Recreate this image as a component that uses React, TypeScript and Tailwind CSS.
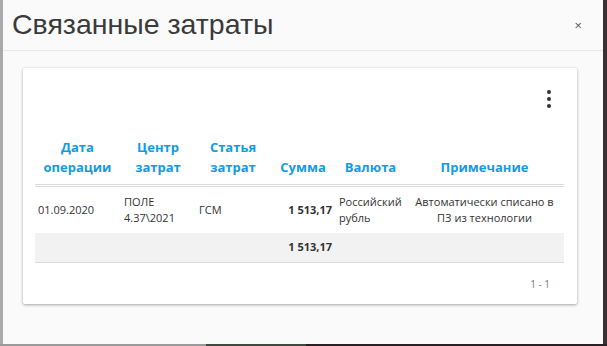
import React from 'react';
import { EllipsisVertical } from 'lucide-react';

const cellFont = { fontFamily: '"Open Sans", "Noto Sans", sans-serif' };

const App: React.FC = () => {
  return (
    <div className="w-[607px] h-[346px] flex flex-col bg-[#2b2326] overflow-hidden">
      <div className="flex h-[344px]">
        <div className="w-[3px] bg-[#a9a9a9]" />

        {/* Modal */}
        <div className="w-[600px] bg-[#fafafa] flex flex-col">
          <div className="h-[51px] flex items-center justify-between pl-[9px] pr-[21px] border-b border-[#e8e8e8]">
            <h2
              className="text-[28.5px] leading-none text-[#3a3a3a] font-normal -mt-[2px]"
              style={{ fontFamily: '"Liberation Sans", Arial, sans-serif' }}
            >
              Связанные затраты
            </h2>
            <button className="text-[13px] leading-none text-[#555]" style={cellFont}>
              ×
            </button>
          </div>

          <div className="pt-[17px] pl-[20px]">
            {/* Card */}
            <div className="w-[554px] h-[236px] bg-white rounded-[2px] shadow-[0_1px_3px_rgba(0,0,0,0.35)] pt-[19px] px-[12px]" style={cellFont}>
              <div className="flex justify-end pr-[4px]">
                <EllipsisVertical className="w-6 h-6 text-[#333]" />
              </div>

              <table className="mt-[22px] w-[529px] table-fixed border-collapse text-[11px] text-[#333]">
                <colgroup>
                  <col className="w-[85px]" />
                  <col className="w-[76px]" />
                  <col className="w-[74px]" />
                  <col className="w-[66px]" />
                  <col className="w-[69px]" />
                  <col className="w-[159px]" />
                </colgroup>
                <thead>
                  <tr className="border-b-[3px] border-double border-[#dcdcdc] text-[13px] leading-5 font-bold text-[#139be1]">
                    <th className="align-bottom text-center pt-1 pb-[7px]">Дата<br />операции</th>
                    <th className="align-bottom text-center pt-1 pb-[7px]">Центр<br />затрат</th>
                    <th className="align-bottom text-center pt-1 pb-[7px]">Статья<br />затрат</th>
                    <th className="align-bottom text-center pt-1 pb-[7px]">Сумма</th>
                    <th className="align-bottom text-center pt-1 pb-[7px]">Валюта</th>
                    <th className="align-bottom text-center pt-1 pb-[7px]">Примечание</th>
                  </tr>
                </thead>
                <tbody className="leading-4">
                  <tr className="h-[47px]">
                    <td className="align-middle pl-[3px]">01.09.2020</td>
                    <td className="align-middle pl-[4px]">ПОЛЕ<br />4.37\2021</td>
                    <td className="align-middle pl-[3px]">ГСМ</td>
                    <td className="align-middle text-right pr-[4px] font-bold">1 513,17</td>
                    <td className="align-middle pl-[3px]">Российский<br />рубль</td>
                    <td className="align-middle text-center">Автоматически списано в<br />ПЗ из технологии</td>
                  </tr>
                  <tr className="h-[30px] bg-[#f2f2f2] border-b border-[#dcdcdc]">
                    <td />
                    <td />
                    <td />
                    <td className="align-middle text-right pr-[4px] font-bold">1 513,17</td>
                    <td />
                    <td />
                  </tr>
                </tbody>
              </table>

              <div className="flex justify-end pr-[15px] pt-[13px] text-[10px] leading-4 text-[#777]">
                1 - 1
              </div>
            </div>
          </div>
        </div>

        <div className="flex-1 bg-[#3b3034]" />
      </div>
      <div className="flex h-[2px]">
        <div className="w-[206px] bg-[#9a9a9a]" />
        <div className="w-[100px] bg-[#3d4a3d]" />
        <div className="flex-1 bg-[#2a1f24]" />
      </div>
    </div>
  );
};

export default App;
